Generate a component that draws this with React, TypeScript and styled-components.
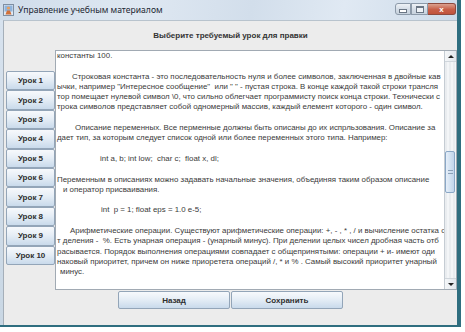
import React from "react";
import styled, { createGlobalStyle } from "styled-components";

const GlobalStyle = createGlobalStyle`
  html, body {
    margin: 0;
    padding: 0;
    background: #fff;
  }
  body {
    font-family: "Liberation Sans", Arial, sans-serif;
  }
`;

const Window = styled.div`
  display: flex;
  flex-direction: column;
  width: 461px;
  height: 327px;
  box-sizing: border-box;
  padding-left: 4px;
  border-right: 4px solid #2f6e7f;
  border-bottom: 2px solid #2f6e7f;
  background: linear-gradient(to bottom, #c6d5e5 0%, #d7e2ee 20px, #c9d7e4 100%);
`;

const TitleBar = styled.div`
  display: flex;
  align-items: flex-start;
  height: 20px;
  margin-left: -4px;
  padding-left: 3px;
  background: linear-gradient(100deg, #cfdcea 0%, #dfe8f2 30%, #d2deeb 55%, #e0e9f3 75%, #cddbe9 100%);
`;

const TitleIcon = styled.svg`
  width: 11px;
  height: 12px;
  margin-top: 4px;
  flex: none;
`;

const TitleText = styled.span`
  margin: 4px 0 0 4px;
  font-family: "Noto Sans", "Liberation Sans", sans-serif;
  font-size: 8.6px;
  line-height: 12px;
  color: #1d2733;
  white-space: nowrap;
`;

const Controls = styled.div`
  display: flex;
  margin: 3px 1px 0 auto;
`;

const ControlButton = styled.div<{ $close?: boolean; $w: number }>`
  display: flex;
  align-items: center;
  justify-content: center;
  width: ${(p) => p.$w}px;
  height: 12px;
  box-sizing: border-box;
  border: 1px solid ${(p) => (p.$close ? "#8d4a3e" : "#8c9aa9")};
  border-left-width: ${(p) => (p.$close ? 0 : 1)}px;
  border-radius: ${(p) => (p.$close ? "0 3px 3px 0" : "0")};
  background: ${(p) =>
    p.$close
      ? "linear-gradient(to bottom, #dba18f, #c75f48 55%, #c0533c)"
      : "linear-gradient(to bottom, #eef2f6, #d3dce6 55%, #c8d3de)"};
  color: #fff;
  font-size: 8px;
  font-weight: bold;
  &:first-child {
    border-radius: 3px 0 0 3px;
  }
`;

const MinGlyph = styled.div`
  width: 6px;
  height: 2px;
  margin-top: 4px;
  border: 1px solid #6a7684;
  background: #fff;
`;

const MaxGlyph = styled.div`
  width: 6px;
  height: 4px;
  border: 1px solid #6a7684;
  border-top-width: 2px;
  background: #eef2f6;
`;

const Body = styled.div`
  display: flex;
  flex-direction: column;
  flex: 1;
  background: #ececec;
  border-top: 1px solid #b8c3cd;
  border-left: 1px solid #a5afb9;
  margin-left: -1px;
`;

const Caption = styled.div`
  display: flex;
  align-items: center;
  justify-content: center;
  height: 29px;
  font-size: 8px;
  font-weight: bold;
  color: #333;
`;

const Middle = styled.div`
  display: flex;
  height: 240px;
  padding-left: 2px;
`;

const LessonList = styled.div`
  display: flex;
  flex-direction: column;
  flex: none;
  width: 49px;
  margin-top: 21px;
`;

const GlassButton = styled.button<{ $w?: number; $h: number }>`
  display: flex;
  align-items: center;
  justify-content: center;
  flex: none;
  width: ${(p) => (p.$w ? `${p.$w}px` : "100%")};
  height: ${(p) => p.$h}px;
  padding: 0;
  box-sizing: border-box;
  border: 1px solid #93a5b8;
  border-radius: 2px;
  background: linear-gradient(to bottom, #f7f9fc 0%, #e6eef6 45%, #c9daeb 100%);
  font-family: "Liberation Sans", Arial, sans-serif;
  font-size: 8px;
  font-weight: bold;
  color: #2e2e2e;
  white-space: nowrap;
`;

const Editor = styled.div`
  display: flex;
  flex: 1;
  min-width: 0;
  border: 1px solid #a1aab3;
  background: #fff;
`;

const TextBody = styled.div`
  flex: 1;
  min-width: 0;
  overflow: hidden;
  padding-left: 1px;
  font-size: 7.9px;
  line-height: 10.3px;
  color: #3a3a3a;
`;

const Line = styled.div<{ $indent?: number }>`
  height: 10.3px;
  padding-left: ${(p) => p.$indent || 0}px;
  white-space: pre;
`;

const ScrollBar = styled.div`
  display: flex;
  flex-direction: column;
  flex: none;
  width: 11px;
  border-left: 1px solid #c5ccd3;
  background: #eceef0;
`;

const ArrowButton = styled.div`
  display: flex;
  align-items: center;
  justify-content: center;
  height: 10px;
  flex: none;
  background: linear-gradient(to right, #f4f6f8, #e2e7ec);
  border-bottom: 1px solid #d0d6dc;
  &:last-child {
    border-bottom: none;
    border-top: 1px solid #d0d6dc;
  }
`;

const Triangle = styled.div<{ $down?: boolean }>`
  width: 0;
  height: 0;
  border-left: 3px solid transparent;
  border-right: 3px solid transparent;
  ${(p) => (p.$down ? "border-top: 3px solid #222;" : "border-bottom: 3px solid #222;")}
`;

const Track = styled.div`
  flex: 1;
  background: repeating-linear-gradient(to right, #e9ecef 0, #e9ecef 2px, #f3f5f7 2px, #f3f5f7 4px);
`;

const Thumb = styled.div<{ $top: number; $h: number }>`
  display: flex;
  align-items: center;
  justify-content: center;
  margin: ${(p) => p.$top}px 1px 0 0;
  height: ${(p) => p.$h}px;
  box-sizing: border-box;
  border: 1px solid #8aa7c6;
  border-radius: 2px;
  background: linear-gradient(to right, #e6eff9, #cfdff0 60%, #c1d5ec);
`;

const Grip = styled.div`
  width: 5px;
  height: 2px;
  border-top: 1px solid #8aa0b8;
  border-bottom: 1px solid #8aa0b8;
`;

const Footer = styled.div`
  display: flex;
  justify-content: center;
  gap: 1px;
  padding-top: 1px;
`;

const lessons = Array.from({ length: 10 }, (_, i) => `Урок ${i + 1}`);

const lines: { t: string; i?: number }[] = [
  { t: "константы 100." },
  { t: "" },
  { t: "Строковая константа - это последовательность нуля и более символов, заключенная в двойные кав", i: 15 },
  { t: "ычки, например \"Интересное сообщение\"  или \" \" - пустая строка. В конце каждой такой строки трансля" },
  { t: "тор помещает нулевой символ \\0, что сильно облегчает программисту поиск конца строки. Технически с" },
  { t: "трока символов представляет собой одномерный массив, каждый елемент которого - один символ." },
  { t: "" },
  { t: "Описание переменных. Все перменные должны быть описаны до их испрльзования. Описание за", i: 18 },
  { t: "дает тип, за которым следует список одной или более переменных этого типа. Например:" },
  { t: "" },
  { t: "int a, b; int low;  char c;  float x, dl;", i: 43 },
  { t: "" },
  { t: "Переменным в описаниях можно задавать начальные значения, объединяя таким образом описание" },
  { t: "и оператор присваивания.", i: 6 },
  { t: "" },
  { t: "int  p = 1; float eps = 1.0 e-5;", i: 44 },
  { t: "" },
  { t: "Арифметические операции. Существуют арифметические операции: +, - , * , / и вычисление остатка о", i: 13 },
  { t: "т деления -  %. Есть унарная операция - (унарный минус). При делении целых чисел дробная часть отб" },
  { t: "расывается. Порядок выполнения операциями совпадает с общепринятыми: операции + и- имеют оди" },
  { t: "наковый приоритет, причем он ниже приоретета операций /, * и % . Самый высокий приоритет унарный" },
  { t: "минус.", i: 3 },
];

export default function App() {
  return (
    <>
      <GlobalStyle />
      <Window>
        <TitleBar>
          <TitleIcon viewBox="0 0 11 12">
            <rect x="0.5" y="0.5" width="10" height="11" fill="#dfe9f4" stroke="#7f8fa2" />
            <rect x="1.5" y="1.5" width="8" height="6" fill="#8fb4dc" />
            <circle cx="5.5" cy="4" r="1.6" fill="#e8a060" />
            <path d="M2.5 10.5 L4 6.5 L7 6.5 L8.5 10.5 Z" fill="#d1703a" />
          </TitleIcon>
          <TitleText>Управление учебным материалом</TitleText>
          <Controls>
            <ControlButton $w={16}>
              <MinGlyph />
            </ControlButton>
            <ControlButton $w={17}>
              <MaxGlyph />
            </ControlButton>
            <ControlButton $w={28} $close>
              x
            </ControlButton>
          </Controls>
        </TitleBar>
        <Body>
          <Caption>Выберите требуемый урок для правки</Caption>
          <Middle>
            <LessonList>
              {lessons.map((l) => (
                <GlassButton key={l} $h={19.4}>
                  {l}
                </GlassButton>
              ))}
            </LessonList>
            <Editor>
              <TextBody>
                {lines.map((l, idx) => (
                  <Line key={idx} $indent={l.i}>
                    {l.t}
                  </Line>
                ))}
              </TextBody>
              <ScrollBar>
                <ArrowButton>
                  <Triangle />
                </ArrowButton>
                <Track>
                  <Thumb $top={89} $h={42}>
                    <Grip />
                  </Thumb>
                </Track>
                <ArrowButton>
                  <Triangle $down />
                </ArrowButton>
              </ScrollBar>
            </Editor>
          </Middle>
          <Footer>
            <GlassButton $w={112} $h={18}>
              Назад
            </GlassButton>
            <GlassButton $w={112} $h={18}>
              Сохранить
            </GlassButton>
          </Footer>
        </Body>
      </Window>
    </>
  );
}
